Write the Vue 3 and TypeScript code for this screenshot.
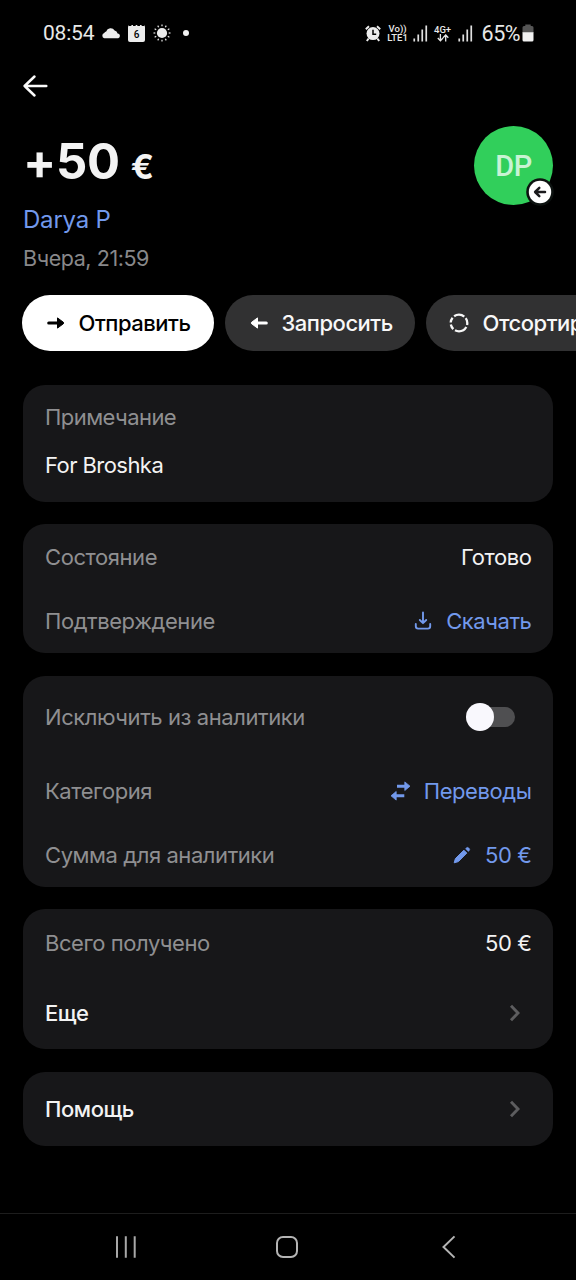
<script setup lang="ts">
interface Row {
  label: string
  value?: string
  icon?: 'download' | 'transfer' | 'edit'
  kind?: 'toggle' | 'nav' | 'note'
  height: string
}

interface Card {
  id: string
  rows: Row[]
}

const cards: Card[] = [
  {
    id: 'note',
    rows: [
      { label: 'Примечание', height: 'h-note-top' },
      { label: 'For Broshka', kind: 'note', height: 'h-note' },
    ],
  },
  {
    id: 'status',
    rows: [
      { label: 'Состояние', value: 'Готово', height: 'h-status' },
      { label: 'Подтверждение', value: 'Скачать', icon: 'download', height: 'h-status' },
    ],
  },
  {
    id: 'analytics',
    rows: [
      { label: 'Исключить из аналитики', kind: 'toggle', height: 'h-toggle' },
      { label: 'Категория', value: 'Переводы', icon: 'transfer', height: 'h-link' },
      { label: 'Сумма для аналитики', value: '50 €', icon: 'edit', height: 'h-link' },
    ],
  },
  {
    id: 'total',
    rows: [
      { label: 'Всего получено', value: '50 €', height: 'h-total' },
      { label: 'Еще', kind: 'nav', height: 'h-more' },
    ],
  },
  { id: 'help', rows: [{ label: 'Помощь', kind: 'nav', height: 'h-help' }] },
]

const signalBars = [3, 7, 12, 16]
</script>

<template>
  <div class="screen">
    <header class="statusbar">
      <span class="clock">08:54</span>
      <svg class="cloud" width="20" height="12" viewBox="0 0 20 12">
        <path d="M3.4 11.2A2.7 2.7 0 0 1 3.2 6 3 3 0 0 1 5.2 4.600 4.6 4.6 0 0 1 13.600 3.600 4 4 0 0 1 16.600 6.500 2.4 2.4 0 0 1 17.200 11.200Z" fill="#ececec" />
      </svg>
      <span class="calendar">6</span>
      <svg class="sun" width="18" height="18" viewBox="0 0 18 18">
        <circle cx="9" cy="9" r="5.1" fill="#ececec" />
        <g stroke="#ececec" stroke-width="1.2">
          <path v-for="n in 12" :key="n" d="M9 .5v1.8" :transform="`rotate(${n * 30} 9 9)`" />
        </g>
      </svg>
      <span class="dot"></span>
      <span class="grow"></span>
      <svg class="alarm" width="16" height="17" viewBox="0 0 16 17">
        <circle cx="8" cy="8.6" r="6.5" fill="#ececec" />
        <path d="M.8 4.2 4 1.2M15.2 4.2 12 1.2M3.6 13.6 1.8 16M12.4 13.6l1.8 2.4" stroke="#ececec" stroke-width="1.9" />
        <path d="M8 4.8v4.4h3.2" fill="none" stroke="#000" stroke-width="1.5" />
      </svg>
      <span class="volte"><span>Vo))</span><span>LTE1</span></span>
      <svg class="signal" width="16" height="17" viewBox="0 0 16 17">
        <rect v-for="(h, i) in signalBars" :key="i" :x="0.4 + i * 4" :y="16.5 - h" width="1.7" :height="h" fill="#e0e0e0" />
      </svg>
      <span class="net">
        <span>4G+</span>
        <svg width="12" height="8" viewBox="0 0 12 8">
          <path d="M3.4 0v6.6M.8 4l2.6 2.8L6 4M8.7 7.6V1M6.1 3.7 8.7.9l2.6 2.8" fill="none" stroke="#e6e6e6" stroke-width="1.3" />
        </svg>
      </span>
      <svg class="signal second" width="16" height="17" viewBox="0 0 16 17">
        <rect v-for="(h, i) in signalBars" :key="i" :x="0.4 + i * 4" :y="16.5 - h" width="1.7" :height="h" fill="#e0e0e0" />
      </svg>
      <span class="percent">65%</span>
      <svg class="battery" width="12" height="18" viewBox="0 0 12 18">
        <path d="M3.3 2V.5h5.4V2H10a1.5 1.5 0 0 1 1.5 1.5V9H.5V3.500A1.500 1.500 0 0 1 2 2Z" fill="#555" />
        <path d="M.5 8.300h11V16a1.500 1.500 0 0 1-1.500 1.500H2A1.500 1.500 0 0 1 .5 16Z" fill="#f2f2f2" />
      </svg>
    </header>

    <nav class="topbar">
      <svg width="26" height="24" viewBox="0 0 26 24">
        <path d="M24.300 12H2.600M12.500 2.500 2.600 12l9.900 9.500" fill="none" stroke="#fafafa" stroke-width="2.500" stroke-linecap="round" stroke-linejoin="round" />
      </svg>
    </nav>

    <section class="hero">
      <div class="summary">
        <h1 class="amount">+50<span class="currency">€</span></h1>
        <a class="name">Darya P</a>
        <p class="date">Вчера, 21:59</p>
      </div>
      <div class="avatar">
        <span class="initials">DP</span>
        <svg class="badge" width="28" height="28" viewBox="0 0 28 28">
          <circle cx="14" cy="14" r="13.800" fill="#0d1210" />
          <circle cx="14" cy="14" r="11.200" fill="#fff" />
          <path d="M19 14H9.800M13.300 9.900 9.100 14l4.200 4.100" fill="none" stroke="#1b1b1d" stroke-width="2.500" stroke-linecap="round" stroke-linejoin="round" />
        </svg>
      </div>
    </section>

    <section class="actions">
      <button class="pill send">
        <svg width="18" height="14" viewBox="0 0 18 14">
          <path d="M1.700 7H11" stroke="#000" stroke-width="3" stroke-linecap="round" />
          <path d="M10.500 1.900 16.400 6.300a.9.9 0 0 1 0 1.400L10.500 12.100Z" fill="#000" stroke="#000" stroke-linejoin="round" />
        </svg>
        <span>Отправить</span>
      </button>
      <button class="pill request">
        <svg width="18" height="14" viewBox="0 0 18 14">
          <path d="M16.300 7H7" stroke="#fff" stroke-width="3" stroke-linecap="round" />
          <path d="M7.500 1.900 1.600 6.300a.9.9 0 0 0 0 1.400L7.500 12.100Z" fill="#fff" stroke="#fff" stroke-linejoin="round" />
        </svg>
        <span>Запросить</span>
      </button>
      <button class="pill sort">
        <svg width="22" height="22" viewBox="0 0 22 22">
          <circle cx="11" cy="11" r="8.300" fill="none" stroke="#f7f7f7" stroke-width="2.300" pathLength="100" stroke-dasharray="25 4 10 4 10 4 21 4 14 4" stroke-dashoffset="-8" />
        </svg>
        <span>Отсортировать</span>
      </button>
    </section>

    <main class="cards">
      <section v-for="card in cards" :key="card.id" class="card" :class="card.id">
        <div v-for="row in card.rows" :key="row.label" class="row" :class="[row.height, row.kind]">
          <span class="label">{{ row.label }}</span>
          <span v-if="row.value" class="value" :class="{ link: row.icon }">
            <svg v-if="row.icon === 'download'" class="download" width="18" height="20" viewBox="0 0 18 20">
              <path d="M9 1.500V12M5.800 9 9 12.200l3.200-3.200M1.800 13v2.300a2.300 2.300 0 0 0 2.300 2.300h9.800a2.300 2.300 0 0 0 2.300-2.300V13" fill="none" stroke="currentColor" stroke-width="1.900" stroke-linecap="round" stroke-linejoin="round" />
            </svg>
            <svg v-else-if="row.icon === 'transfer'" class="transfer" width="21" height="20" viewBox="0 0 21 20">
              <path d="M7 5.200H16M14.300 14.800H5" stroke="currentColor" stroke-width="3" />
              <path d="M14.800.9 20 5.200l-5.200 4.300ZM6.200 10.500 1 14.800l5.200 4.300Z" fill="currentColor" stroke="currentColor" stroke-width=".8" stroke-linejoin="round" />
            </svg>
            <svg v-else-if="row.icon === 'edit'" class="edit" width="18" height="18" viewBox="0 0 18 18">
              <path d="M1.200 16.800 2.400 12.600 10.900 4.200 13.800 7.100 5.400 15.600Z" fill="currentColor" stroke="currentColor" stroke-linejoin="round" />
              <path d="m12.500 2.700 1-.9a1.500 1.500 0 0 1 2 0l.8.8a1.500 1.500 0 0 1 0 2l-1 1Z" fill="currentColor" stroke="currentColor" stroke-width=".5" />
            </svg>
            <span>{{ row.value }}</span>
          </span>
          <span v-else-if="row.kind === 'toggle'" class="switch"><span class="knob"></span></span>
          <svg v-else-if="row.kind === 'nav'" class="chevron" width="12" height="18" viewBox="0 0 12 18">
            <path d="M2 1.700 9 9 2 16.300" fill="none" stroke="#5d5d5f" stroke-width="2.900" />
          </svg>
        </div>
      </section>
    </main>

    <footer class="navbar">
      <svg width="24" height="24" viewBox="0 0 24 24">
        <path d="M3 1.200v21.600M11.800 1.200v21.600M20.700 1.200v21.600" stroke="#a8a8a8" stroke-width="2" />
      </svg>
      <svg class="home" width="24" height="24" viewBox="0 0 24 24">
        <rect x="2" y="2" width="20" height="20" rx="6" fill="none" stroke="#b4b4b4" stroke-width="2" />
      </svg>
      <svg width="24" height="24" viewBox="0 0 24 24">
        <path d="M17.500 1.400 6.500 12l11 10.600" fill="none" stroke="#b4b4b4" stroke-width="2" />
      </svg>
    </footer>
  </div>
</template>

<style>
body {
  background: #000;
}
</style>

<style scoped>
.screen {
  box-sizing: border-box;
  display: flex;
  flex-direction: column;
  width: 576px;
  height: 1280px;
  overflow: hidden;
  background: #000;
  color: #f3f3f3;
  font-family: Inter, Roboto, sans-serif;
  font-size: 22px;
  letter-spacing: -0.430px;
}
svg {
  display: block;
  flex: none;
}
.statusbar {
  display: flex;
  align-items: center;
  box-sizing: border-box;
  height: 66px;
  padding: 0 42px 0 43px;
  font-family: Roboto, sans-serif;
  color: #e8e8e8;
  letter-spacing: 0;
}
.clock {
  width: 58px;
  font-size: 21px;
  letter-spacing: -0.200px;
}
.calendar {
  width: 17px;
  height: 17px;
  margin: 0 8px 0 7px;
  border-radius: 2px;
  background: radial-gradient(circle at 50% 0, #000 0 1px, transparent 1.500px) 0 0 / 4.250px 4px repeat-x #ececec;
  color: #000;
  font-size: 10px;
  font-weight: 500;
  line-height: 19px;
  text-align: center;
}
.dot {
  width: 6px;
  height: 6px;
  margin-left: 12px;
  border-radius: 50%;
  background: #f2f2f2;
}
.grow {
  flex: 1;
}
.volte,
.net {
  display: flex;
  flex-direction: column;
  align-items: center;
  font-size: 9.500px;
  font-weight: 500;
  line-height: 9px;
}
.volte {
  width: 22px;
  margin: 0 4px 0 6px;
}
.net {
  width: 18px;
  margin: 0 6px 0 5px;
}
.percent {
  margin: 0 2px 0 8px;
  font-size: 21.500px;
  letter-spacing: -0.500px;
}
.topbar {
  display: flex;
  align-items: center;
  height: 40px;
  padding-left: 22px;
}
.hero {
  display: flex;
  justify-content: space-between;
  height: 189px;
  padding: 0 23px;
}
.summary {
  display: flex;
  flex-direction: column;
}
.amount {
  height: 96px;
  margin: 0;
  padding-top: 26px;
  box-sizing: border-box;
  font-size: 49px;
  font-weight: 700;
  line-height: 60px;
  letter-spacing: -0.300px;
}
.currency {
  margin-left: 11px;
  font-size: 34px;
}
.name {
  height: 36px;
  font-size: 24px;
  line-height: 36px;
  letter-spacing: -0.200px;
  color: #7299ec;
}
.date {
  margin: 0;
  font-size: 21.500px;
  line-height: 40px;
  color: #88888a;
}
.avatar {
  position: relative;
  display: flex;
  align-items: center;
  justify-content: center;
  width: 79px;
  height: 79px;
  margin-top: 20px;
  border-radius: 50%;
  background: #31cf5b;
}
.initials {
  font-family: Roboto, sans-serif;
  font-size: 29px;
  font-weight: 500;
  letter-spacing: -0.500px;
  color: #c9f3d4;
}
.badge {
  position: absolute;
  right: -1px;
  bottom: -1px;
}
.actions {
  display: flex;
  flex: none;
  gap: 11px;
  height: 56px;
  padding-left: 22px;
}
.pill {
  display: flex;
  flex: none;
  align-items: center;
  box-sizing: border-box;
  height: 56px;
  margin: 0;
  padding: 0 24px 0 25px;
  border: 0;
  border-radius: 28px;
  background: #313132;
  color: #f8f8f8;
  font: inherit;
  font-weight: 500;
  letter-spacing: -0.480px;
  white-space: nowrap;
}
.send {
  width: 192px;
  background: #fff;
  color: #000;
}
.request {
  width: 190px;
}
.pill span {
  margin-left: 13.500px;
}
.sort {
  padding-left: 22px;
}
.sort span {
  margin-left: 12.500px;
}
.cards {
  display: flex;
  flex-direction: column;
  gap: 22.750px;
  padding: 34px 23px 0 22.500px;
}
.card {
  border-radius: 22px;
  background: #171719;
}
.note.card {
  box-sizing: border-box;
  height: 116.500px;
  padding-top: 8.500px;
  letter-spacing: -0.560px;
}
.row {
  display: flex;
  align-items: center;
  justify-content: space-between;
  padding: 0 22px 0 22.500px;
}
.h-note-top,
.h-note {
  height: 47.500px;
}
.h-status {
  height: 64.500px;
}
.h-toggle {
  height: 82.500px;
}
.h-link {
  height: 64px;
}
.h-total {
  height: 67px;
}
.h-more {
  height: 72.500px;
}
.h-help {
  height: 74.500px;
}
.label {
  color: #8f8f91;
}
.row.note .label {
  color: #f3f3f3;
}
.nav .label {
  color: #f3f3f3;
  font-weight: 500;
}
.value {
  display: flex;
  align-items: center;
}
.value span {
  margin-right: -0.430px;
}
.link {
  color: #7299ec;
}
.download,
.transfer,
.edit {
  margin-right: 14px;
}
.transfer {
  margin-right: 13px;
}
.switch {
  box-sizing: border-box;
  display: flex;
  align-items: center;
  width: 49px;
  height: 20px;
  margin-right: 16px;
  border-radius: 10px;
  background: linear-gradient(90deg, transparent 20px, #4f4f51 20px);
}
.knob {
  width: 28px;
  height: 28px;
  border-radius: 50%;
  background: #f9f8fd;
}
.chevron {
  margin-right: 10px;
}
.navbar {
  display: flex;
  align-items: center;
  justify-content: space-between;
  box-sizing: border-box;
  height: 67px;
  margin-top: auto;
  padding: 0 115px 0 114px;
  border-top: 1px solid #1d1d1d;
}
.home {
  margin-right: 1px;
}
</style>
